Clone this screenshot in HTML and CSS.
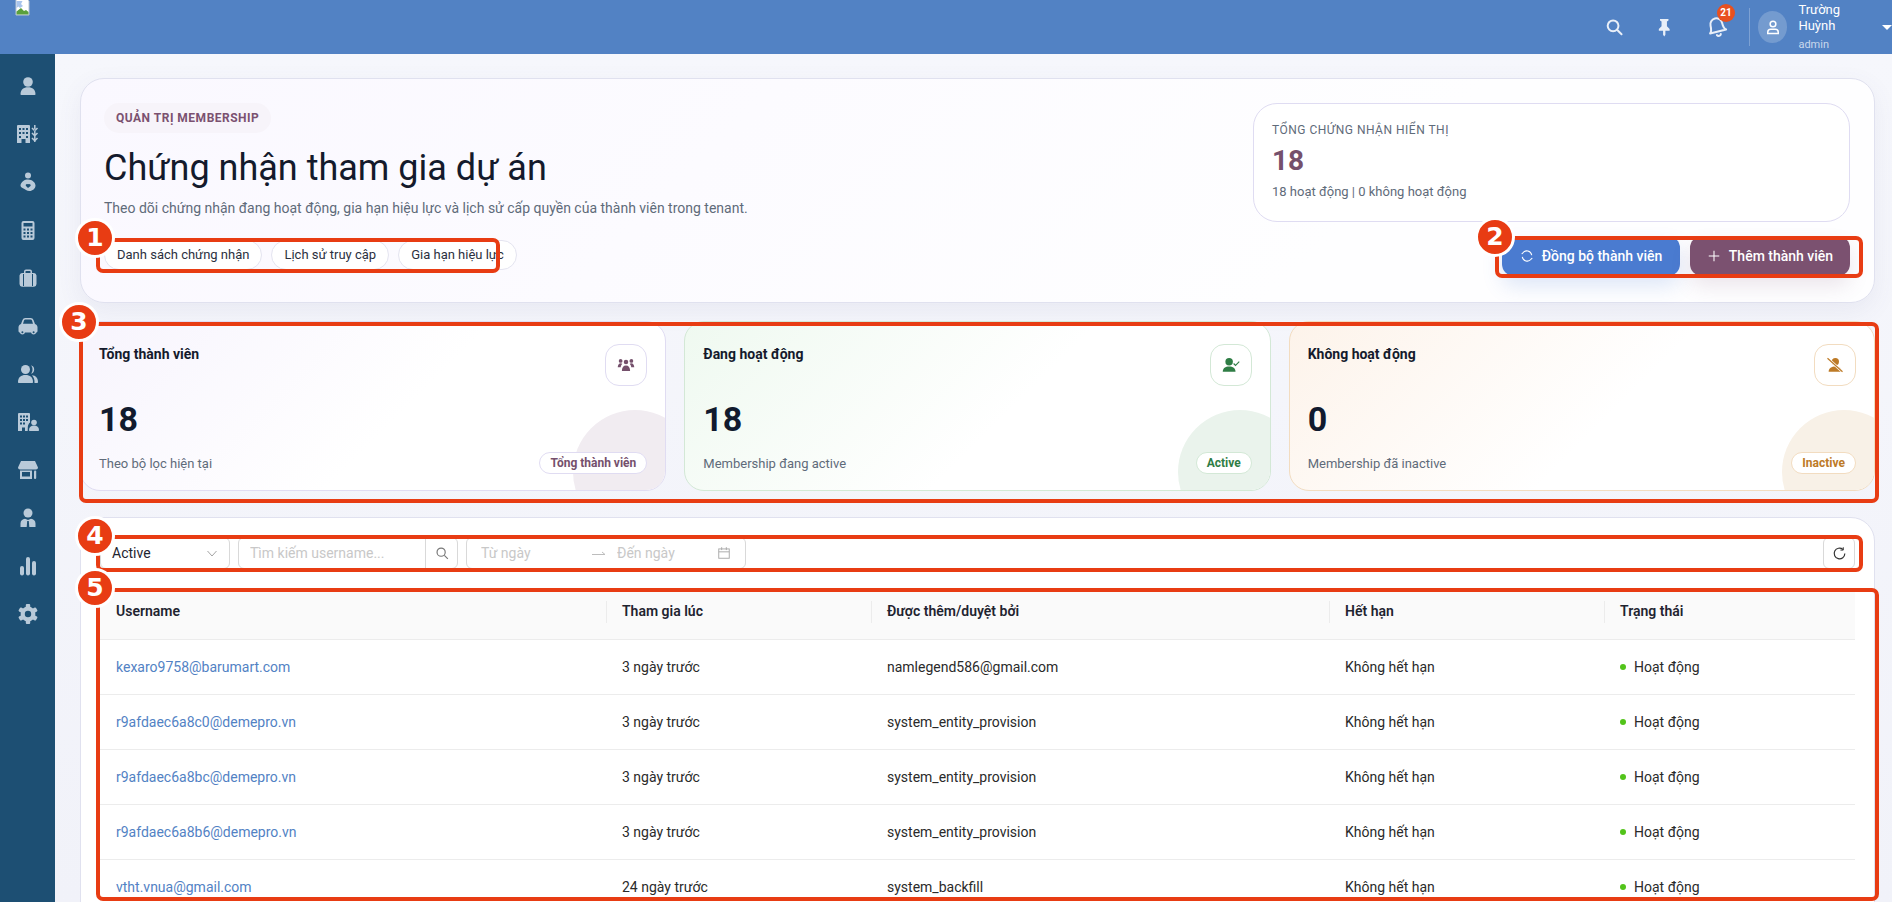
FILE: index.html
```html
<!DOCTYPE html>
<html lang="vi">
<head>
    <meta charset="UTF-8">
    <meta name="viewport" content="width=device-width, initial-scale=1.0">
    <title>Chứng nhận tham gia dự án</title>
    <link rel="stylesheet" href="styles.css">
</head>
<body>
    <div class="app">
        <!-- Topbar -->
        <header class="topbar">
            <svg class="broken-img" viewBox="0 0 16 16">
                <path d="M1 -3h9l4 4v14H1z" fill="#fff" stroke="#b9c4d0" stroke-width="1"/>
                <path d="M1.5 14.5v-3L6 8l3 3 2-1 2.500 2v2.500z" fill="#5aa03c"/>
                <path d="M1.500 8V1h6L6 4l2 2-3 2-1.500-1.500z" fill="#a8c4ec"/>
            </svg>
            <div class="topbar-right">
                <svg class="top-icon" viewBox="0 0 24 24" fill="none" stroke="currentColor" stroke-width="2.600" stroke-linecap="round"><circle cx="10.500" cy="10.500" r="7"/><path d="M16 16l5.500 5.500"/></svg>
                <svg class="top-icon" viewBox="0 0 24 24" fill="currentColor"><path d="M6.500 1.500h11v2.200l-2 1.300v6l3.500 3.500v2.500h-5.500v5l-1.500 2.500-1.500-2.500v-5H5v-2.500L8.500 11V5l-2-1.300z"/></svg>
                <div class="bell">
                    <svg class="top-icon" viewBox="0 0 24 24" fill="none" stroke="currentColor" stroke-width="2.200" stroke-linecap="round" stroke-linejoin="round"><g transform="rotate(-14 12 12)"><path d="M12 2.500a6.500 6.500 0 0 0-6.500 6.500c0 6-2.500 8-2.500 8h18s-2.500-2-2.500-8A6.500 6.500 0 0 0 12 2.500z"/><path d="M9.800 20.500a2.400 2.400 0 0 0 4.400 0"/></g></svg>
                    <span class="bell-count">21</span>
                </div>
                <div class="top-divider"></div>
                <div class="avatar">
                    <svg viewBox="0 0 24 24" fill="none" stroke="#fff" stroke-width="2"><circle cx="12" cy="8" r="3.800"/><path d="M5 20.500v-1.500c0-2.500 2-4 4-4h6c2 0 4 1.500 4 4v1.500z"/></svg>
                </div>
                <div class="user-info">
                    <span class="user-name">Trường Huỳnh</span>
                    <span class="user-role">admin</span>
                </div>
                <span class="caret"></span>
            </div>
        </header>

        <div class="body-wrap">
            <!-- Sidebar -->
            <nav class="sidebar">
                <a class="side-item"><svg viewBox="0 0 24 24" fill="currentColor"><circle cx="12" cy="8" r="4.800"/><path d="M4.500 20.300c0-4.500 3-7 7.500-7s7.500 2.500 7.500 7c0 .5-.3.8-.8.8H5.300c-.5 0-.8-.3-.8-.8z"/></svg></a>
                <a class="side-item"><svg viewBox="0 0 24 24" fill="currentColor"><path fill-rule="evenodd" d="M1 4a1 1 0 0 1 1-1h11a1 1 0 0 1 1 1v17H9.500v-4h-4v4H1zM3 6h2v2H3zM6.500 6h2v2h-2zM10 6h2v2h-2zM3 10h2v2H3zM6.500 10h2v2h-2zM10 10h2v2h-2zM3 14h2v2H3zM10 14h2v2h-2z"/><path d="M18.800 3v4M16 6l2.500 2.500M21.500 6L19 8.500M16 11l2.500 2.500M21.500 11L19 13.500M16 16l2.500 2.500M21.500 16L19 18.500M18.800 9v11" stroke="currentColor" stroke-width="1.500" fill="none"/></svg></a>
                <a class="side-item"><svg viewBox="0 0 24 24" fill="currentColor"><circle cx="12" cy="5.500" r="3"/><path fill-rule="evenodd" d="M4.500 15c1-3.500 4-5.500 7.500-5.500 4 0 7.500 3 7.500 6 0 3-3 5.500-6 5.500-3 0-4-2-7-3-1-.4-2.200-1.500-2-3zM12 14.500c-1-1-3 0-2 1.500l2 2 2.500-2c1-1.500-1.500-2.500-2.500-1.500z"/></svg></a>
                <a class="side-item"><svg viewBox="0 0 24 24" fill="currentColor"><path fill-rule="evenodd" d="M7.500 3h9a2 2 0 0 1 2 2v15a2 2 0 0 1-2 2h-9a2 2 0 0 1-2-2V5a2 2 0 0 1 2-2zM7.500 5v3.500h9V5zM7.500 10.500v2h2v-2zM11 10.500v2h2v-2zM14.500 10.500v2h2v-2zM7.500 14v2h2v-2zM11 14v2h2v-2zM14.500 14v2h2v-2zM7.500 17.500v2h2v-2zM11 17.500v2h2v-2zM14.500 17.500v2h2v-2z"/></svg></a>
                <a class="side-item"><svg viewBox="0 0 24 24" fill="currentColor"><path fill-rule="evenodd" d="M8 7V5.500A2 2 0 0 1 10 3.500h4a2 2 0 0 1 2 2V7h2a3 3 0 0 1 2.500 2.500V18a3 3 0 0 1-2.500 2.800H6A3 3 0 0 1 3.500 18V9.500A3 3 0 0 1 6 7zM9.500 5.500V7h5V5.500a.5.5 0 0 0-.5-.5h-4a.5.5 0 0 0-.5.5zM7 8v12h1V8zM16 8v12h1V8z"/></svg></a>
                <a class="side-item"><svg viewBox="0 0 24 24" fill="currentColor"><path fill-rule="evenodd" d="M5 10l1.500-4a3 3 0 0 1 2.800-2h5.400a3 3 0 0 1 2.800 2L19 10c1.500.5 2.500 1.800 2.500 3.300V17c0 .8-.5 1.500-1.300 1.500a2.700 2.700 0 0 1-5.200 0H9a2.700 2.700 0 0 1-5.200 0c-.8 0-1.300-.7-1.300-1.500v-3.700C2.500 11.800 3.500 10.500 5 10zM7 9.800h10l-1-3.300c-.2-.6-.7-1-1.300-1H9.300c-.6 0-1.100.4-1.300 1zM6.400 17.200a1 1 0 1 0 0 2 1 1 0 0 0 0-2zM17.600 17.200a1 1 0 1 0 0 2 1 1 0 0 0 0-2z"/></svg></a>
                <a class="side-item"><svg viewBox="0 0 24 24" fill="currentColor"><circle cx="9.500" cy="7.500" r="4.500"/><path d="M2 20c0-4.500 3-7 7.500-7s7.500 2.500 7.500 7c0 .6-.4 1-1 1H3c-.6 0-1-.4-1-1z"/><path d="M15 3.200a4.500 4.500 0 0 1 0 8.600c1-1.200 1.500-2.700 1.500-4.300S16 4.400 15 3.200zM16 13.200c3.800.2 6 2.800 6 6.800 0 .6-.4 1-1 1h-2.500c.2-3-.6-5.800-2.500-7.800z"/></svg></a>
                <a class="side-item"><svg viewBox="0 0 24 24" fill="currentColor"><path fill-rule="evenodd" d="M2 4a1 1 0 0 1 1-1h10a1 1 0 0 1 1 1v8.500c-1.300 1-2 2.500-2.200 4.500L11.700 21H9v-3.500H6V21H2zM4 5.500v2h2v-2zM7 5.500v2h2v-2zM10 5.500v2h2v-2zM4 9v2h2V9zM7 9v2h2V9zM10 9v2h2V9zM4 12.500v2h2v-2zM7 12.500v2h2v-2z"/><circle cx="18" cy="12.500" r="2.800"/><path d="M13 20c0-2.800 2-4.500 5-4.500s5 1.700 5 4.500c0 .6-.4 1-1 1h-8c-.6 0-1-.4-1-1z"/></svg></a>
                <a class="side-item"><svg viewBox="0 0 24 24" fill="currentColor"><path d="M5 3h14l3 6.500c0 1.200-1 2-2 2H4c-1 0-2-.8-2-2z"/><path fill-rule="evenodd" d="M4 12.500h12V21H4zM6 14v4.500h8V14z"/><rect x="18" y="12.500" width="2.200" height="8.500" rx="1"/></svg></a>
                <a class="side-item"><svg viewBox="0 0 24 24" fill="currentColor"><circle cx="12" cy="7" r="4.500"/><path fill-rule="evenodd" d="M4.500 21v-3.500c0-2.800 2-4.500 4.500-4.700l3 1.200 3-1.200c2.500.2 4.500 1.900 4.500 4.700V21zM11.200 15l-.5 6h2.600l-.5-6z"/></svg></a>
                <a class="side-item"><svg viewBox="0 0 24 24" fill="currentColor"><rect x="4" y="12" width="4" height="9.500" rx="2"/><rect x="10" y="3" width="4" height="18.500" rx="2"/><rect x="16" y="7" width="4" height="14.500" rx="2"/></svg></a>
                <a class="side-item"><svg viewBox="0 0 24 24" fill="none" stroke="currentColor"><circle cx="12" cy="12" r="5.300" stroke-width="4.200"/><g fill="currentColor" stroke="none"><rect x="9.800" y="2" width="4.400" height="5" rx="1"/><rect x="9.800" y="2" width="4.400" height="5" rx="1" transform="rotate(60 12 12)"/><rect x="9.800" y="2" width="4.400" height="5" rx="1" transform="rotate(120 12 12)"/><rect x="9.800" y="2" width="4.400" height="5" rx="1" transform="rotate(180 12 12)"/><rect x="9.800" y="2" width="4.400" height="5" rx="1" transform="rotate(240 12 12)"/><rect x="9.800" y="2" width="4.400" height="5" rx="1" transform="rotate(300 12 12)"/></g></svg></a>
            </nav>

            <main class="main">
                <!-- Hero -->
                <section class="hero">
                    <div class="hero-left">
                        <span class="eyebrow">QUẢN TRỊ MEMBERSHIP</span>
                        <h1 class="hero-title">Chứng nhận tham gia dự án</h1>
                        <p class="hero-sub">Theo dõi chứng nhận đang hoạt động, gia hạn hiệu lực và lịch sử cấp quyền của thành viên trong tenant.</p>
                        <div class="hero-tabs">
                            <span class="tab-pill">Danh sách chứng nhận</span>
                            <span class="tab-pill">Lịch sử truy cập</span>
                            <span class="tab-pill">Gia hạn hiệu lực</span>
                        </div>
                    </div>
                    <div class="hero-right">
                        <div class="total-box">
                            <div class="total-label">TỔNG CHỨNG NHẬN HIỂN THỊ</div>
                            <div class="total-value">18</div>
                            <div class="total-sub">18 hoạt động | 0 không hoạt động</div>
                        </div>
                        <div class="hero-actions">
                            <button class="btn btn-blue">
                                <svg viewBox="0 0 24 24" fill="none" stroke="currentColor" stroke-width="1.800" stroke-linecap="round"><path d="M20 10a8.500 8.500 0 0 0-15-3.500L3.500 8M4 14a8.500 8.500 0 0 0 15 3.500l1.500-1.500"/><path d="M3.500 3.500V8H8M20.500 20.500V16H16" stroke-width="0"/></svg>
                                Đồng bộ thành viên
                            </button>
                            <button class="btn btn-purple">
                                <svg viewBox="0 0 24 24" fill="none" stroke="currentColor" stroke-width="1.800"><path d="M12 3v18M3 12h18"/></svg>
                                Thêm thành viên
                            </button>
                        </div>
                    </div>
                </section>

                <!-- KPI cards -->
                <section class="kpi-grid">
                    <div class="kpi-card kpi-total">
                        <div class="kpi-head">
                            <span class="kpi-title">Tổng thành viên</span>
                            <span class="kpi-icon"><svg viewBox="0 0 24 24" fill="currentColor"><circle cx="12" cy="8" r="3"/><circle cx="4.800" cy="6.500" r="2.500"/><circle cx="19.200" cy="6.500" r="2.500"/><path d="M6.500 20c0-5 2-7.500 5.500-7.500s5.500 2.500 5.500 7.500zM1 15c0-3 1.500-5.500 4-5.500 1 0 1.500.3 2 .8C5.800 12 5 13.500 5 15zM23 15c0-3-1.500-5.500-4-5.500-1 0-1.500.3-2 .8 1.200 1.700 2 3.200 2 4.700z"/></svg></span>
                        </div>
                        <div class="kpi-value">18</div>
                        <div class="kpi-foot">
                            <span class="kpi-note">Theo bộ lọc hiện tại</span>
                            <span class="kpi-tag">Tổng thành viên</span>
                        </div>
                    </div>
                    <div class="kpi-card kpi-active">
                        <div class="kpi-head">
                            <span class="kpi-title">Đang hoạt động</span>
                            <span class="kpi-icon"><svg viewBox="0 0 24 24" fill="currentColor"><circle cx="9.500" cy="7.500" r="5"/><path d="M1 21c0-4.500 3.500-7 8.500-7s8.500 2.500 8.500 7z"/><path d="M15.500 10l2.500 2.500 5-5" fill="none" stroke="currentColor" stroke-width="1.500"/></svg></span>
                        </div>
                        <div class="kpi-value">18</div>
                        <div class="kpi-foot">
                            <span class="kpi-note">Membership đang active</span>
                            <span class="kpi-tag">Active</span>
                        </div>
                    </div>
                    <div class="kpi-card kpi-inactive">
                        <div class="kpi-head">
                            <span class="kpi-title">Không hoạt động</span>
                            <span class="kpi-icon"><svg viewBox="0 0 24 24" fill="currentColor"><circle cx="12.500" cy="7.500" r="4.800"/><path d="M3.500 21c0-4.500 4-7 9-7s8.500 2.500 8.500 7z"/><path d="M2 3l20 18" stroke="#fff" stroke-width="3.500"/><path d="M2 3l20 18" stroke="currentColor" stroke-width="1.600"/></svg></span>
                        </div>
                        <div class="kpi-value">0</div>
                        <div class="kpi-foot">
                            <span class="kpi-note">Membership đã inactive</span>
                            <span class="kpi-tag">Inactive</span>
                        </div>
                    </div>
                </section>

                <!-- Filter + table -->
                <section class="panel">
                    <div class="filters">
                        <div class="field select-field">
                            <span>Active</span>
                            <svg viewBox="0 0 24 24" fill="none" stroke="#9a9a9a" stroke-width="1.800"><path d="M3 8l9 10 9-10"/></svg>
                        </div>
                        <div class="field search-field">
                            <input type="text" placeholder="Tìm kiếm username...">
                            <span class="search-btn"><svg viewBox="0 0 24 24" fill="none" stroke="#777" stroke-width="2"><circle cx="10.500" cy="10.500" r="7"/><path d="M16 16l6 6"/></svg></span>
                        </div>
                        <div class="field date-field">
                            <input type="text" placeholder="Từ ngày">
                            <svg class="date-arrow" viewBox="0 0 16 8" fill="none" stroke="#bdbdbd" stroke-width="1"><path d="M1 5.500h13M11 3l3 2.500"/></svg>
                            <input type="text" placeholder="Đến ngày">
                            <svg class="date-cal" viewBox="0 0 24 24" fill="none" stroke="#a8a8a8" stroke-width="1.600"><rect x="3" y="5" width="18" height="16"/><path d="M3 10h18M8 2v5M16 2v5"/></svg>
                        </div>
                        <button class="refresh-btn"><svg viewBox="0 0 24 24" fill="none" stroke="#333" stroke-width="1.900"><path d="M20.500 12a8.500 8.500 0 1 1-3-6.500"/><path d="M18 2v4.500h-4.500" stroke-width="1.600"/></svg></button>
                    </div>

                    <table class="member-table">
                        <thead>
                            <tr>
                                <th class="col-user">Username</th>
                                <th class="col-joined">Tham gia lúc</th>
                                <th class="col-by">Được thêm/duyệt bởi</th>
                                <th class="col-exp">Hết hạn</th>
                                <th>Trạng thái</th>
                            </tr>
                        </thead>
                        <tbody>
                            <tr>
                                <td><a class="user-link">kexaro9758@barumart.com</a></td>
                                <td>3 ngày trước</td>
                                <td>namlegend586@gmail.com</td>
                                <td>Không hết hạn</td>
                                <td><span class="status-dot"></span>Hoạt động</td>
                            </tr>
                            <tr>
                                <td><a class="user-link">r9afdaec6a8c0@demepro.vn</a></td>
                                <td>3 ngày trước</td>
                                <td>system_entity_provision</td>
                                <td>Không hết hạn</td>
                                <td><span class="status-dot"></span>Hoạt động</td>
                            </tr>
                            <tr>
                                <td><a class="user-link">r9afdaec6a8bc@demepro.vn</a></td>
                                <td>3 ngày trước</td>
                                <td>system_entity_provision</td>
                                <td>Không hết hạn</td>
                                <td><span class="status-dot"></span>Hoạt động</td>
                            </tr>
                            <tr>
                                <td><a class="user-link">r9afdaec6a8b6@demepro.vn</a></td>
                                <td>3 ngày trước</td>
                                <td>system_entity_provision</td>
                                <td>Không hết hạn</td>
                                <td><span class="status-dot"></span>Hoạt động</td>
                            </tr>
                            <tr>
                                <td><a class="user-link">vtht.vnua@gmail.com</a></td>
                                <td>24 ngày trước</td>
                                <td>system_backfill</td>
                                <td>Không hết hạn</td>
                                <td><span class="status-dot"></span>Hoạt động</td>
                            </tr>
                        </tbody>
                    </table>
                </section>
            </main>
        </div>

        <!-- Numbered callouts drawn over the page -->
        <div class="mark mark-1"></div>
        <div class="mark mark-2"></div>
        <div class="mark mark-3"></div>
        <div class="mark mark-4"></div>
        <div class="mark mark-5"></div>
        <span class="num num-1">1</span>
        <span class="num num-2">2</span>
        <span class="num num-3">3</span>
        <span class="num num-4">4</span>
        <span class="num num-5">5</span>
    </div>
</body>
</html>
```

FILE: styles.css
```css
/* Global */
* {
    box-sizing: border-box;
}

html, body {
    margin: 0;
    padding: 0;
    height: 100%;
    overflow: hidden;
}

body {
    font-family: Roboto, 'Liberation Sans', sans-serif;
    font-size: 14px;
    color: #1f2430;
    background: #f4f5fb;
}

.app {
    position: relative;
    display: flex;
    flex-direction: column;
    height: 902px;
    overflow: hidden;
}

/* Topbar */
.topbar {
    flex: 0 0 54px;
    display: flex;
    justify-content: flex-end;
    position: relative;
    background: #5282c4;
    color: #e9eff8;
}

.broken-img {
    position: absolute;
    left: 15px;
    top: 0;
    width: 16px;
    height: 16px;
}

.topbar-right {
    display: flex;
    align-items: center;
    height: 100%;
    width: 302px;
    padding-left: 15px;
}

.top-icon {
    width: 20px;
    height: 20px;
    display: block;
    margin-right: 32px;
}

.bell {
    position: relative;
    margin-right: 0;
}

.bell .top-icon {
    width: 22px;
    height: 22px;
    margin-right: 21px;
}

.bell-count {
    position: absolute;
    left: 11px;
    top: -12px;
    width: 18px;
    height: 18px;
    border-radius: 50%;
    background: #e8501f;
    color: #fff;
    font-size: 10px;
    font-weight: 700;
    line-height: 18px;
    text-align: center;
}

.top-divider {
    width: 1px;
    height: 38px;
    background: rgba(255, 255, 255, 0.25);
    margin-right: 8px;
}

.avatar {
    width: 32px;
    height: 32px;
    border-radius: 50%;
    background: rgba(255, 255, 255, 0.2);
    display: flex;
    align-items: center;
    justify-content: center;
    margin-right: 11px;
}

.avatar svg {
    width: 18px;
    height: 18px;
}

.user-info {
    display: flex;
    flex-direction: column;
    gap: 4px;
    margin-right: 8px;
}

.user-name {
    font-size: 13px;
    line-height: 16px;
    color: #fff;
}

.user-role {
    font-size: 11px;
    line-height: 14px;
    color: rgba(255, 255, 255, 0.7);
}

.caret {
    width: 0;
    height: 0;
    border-left: 5px solid transparent;
    border-right: 5px solid transparent;
    border-top: 5px solid #fff;
}

/* Sidebar */
.body-wrap {
    flex: 1;
    display: flex;
    min-height: 0;
}

.sidebar {
    flex: 0 0 55px;
    padding-top: 8px;
    background: #1d4f73;
    color: #b9cad9;
}

.side-item {
    display: flex;
    align-items: center;
    justify-content: center;
    height: 48px;
}

.side-item svg {
    width: 24px;
    height: 24px;
}

/* Main */
.main {
    flex: 1;
    min-width: 0;
    padding: 24px 17px 0 25px;
    background: linear-gradient(180deg, #f6f7fc, #f1f2f9);
}

/* Hero */
.hero {
    display: flex;
    justify-content: space-between;
    height: 225px;
    margin-bottom: 18px;
    padding: 24px 24px 0 23px;
    background: linear-gradient(135deg, #faf8ff, #fefeff 70%);
    border: 1px solid #e0e1ef;
    border-radius: 24px;
    box-shadow: 0 8px 24px rgba(90, 90, 140, 0.08);
}

.eyebrow {
    display: inline-block;
    height: 30px;
    padding: 0 12px;
    border-radius: 15px;
    background: #f7f4fa;
    color: #7b5170;
    font-size: 12px;
    font-weight: 700;
    line-height: 30px;
    letter-spacing: 0.5px;
}

.hero-title {
    margin: 13px 0 6px;
    font-size: 36px;
    font-weight: 400;
    line-height: 44px;
    color: #141a2c;
}

.hero-sub {
    margin: 0;
    font-size: 14px;
    line-height: 24px;
    color: #5f6b7a;
}

.hero-tabs {
    display: flex;
    gap: 9px;
    margin-top: 20px;
}

.tab-pill {
    height: 30px;
    padding: 0 12px;
    border: 1px solid #e4e4f0;
    border-radius: 15px;
    background: #fff;
    font-size: 13px;
    line-height: 28px;
    color: #2b3040;
}

.hero-right {
    width: 597px;
}

.total-box {
    height: 119px;
    padding: 18px 18px 0;
    background: #fff;
    border: 1px solid #dfdcf2;
    border-radius: 24px;
}

.total-label {
    font-size: 12px;
    line-height: 16px;
    letter-spacing: 0.5px;
    color: #5f6b7a;
}

.total-value {
    margin: 6px 0 5px;
    font-size: 28px;
    font-weight: 700;
    line-height: 34px;
    color: #75506c;
}

.total-sub {
    font-size: 13px;
    line-height: 18px;
    color: #5f6b7a;
}

.hero-actions {
    display: flex;
    justify-content: flex-end;
    gap: 10px;
    margin-top: 14px;
}

.btn {
    display: flex;
    align-items: center;
    justify-content: center;
    gap: 8px;
    height: 40px;
    border: none;
    border-radius: 12px;
    color: #fff;
    font-family: inherit;
    font-size: 14px;
    font-weight: 500;
}

.btn svg {
    width: 14px;
    height: 14px;
}

.btn-blue {
    width: 178px;
    background: #4a7bd0;
    box-shadow: 0 10px 20px rgba(74, 123, 208, 0.18);
}

.btn-purple {
    width: 160px;
    background: #7b5170;
    box-shadow: 0 10px 20px rgba(123, 81, 112, 0.14);
}

/* KPI cards */
.kpi-grid {
    display: grid;
    grid-template-columns: repeat(3, 1fr);
    gap: 18px;
    margin-bottom: 26px;
}

.kpi-card {
    position: relative;
    height: 170px;
    padding: 22px 18px 16px;
    overflow: hidden;
    background: #fff;
    border: 1px solid #e0dcf2;
    border-radius: 20px;
}

.kpi-card::after {
    content: "";
    position: absolute;
    right: -32px;
    bottom: -44px;
    width: 124px;
    height: 124px;
    border-radius: 50%;
    background: var(--bubble);
}

.kpi-total {
    --tone: #75506c;
    --bubble: #f1ecf1;
    border-color: #e0dcf2;
    background: linear-gradient(135deg, #f7f4fd, #fff 55%);
}

.kpi-active {
    --tone: #2f7d45;
    --bubble: #eaf3ec;
    border-color: #d3e8d6;
    background: linear-gradient(135deg, #eff9f0, #fff 55%);
}

.kpi-inactive {
    --tone: #bd7a26;
    --bubble: #f8f1e7;
    border-color: #f2dcc0;
    background: linear-gradient(135deg, #fdf3ea, #fff 55%);
}

.kpi-head, .kpi-foot {
    position: relative;
    z-index: 1;
    display: flex;
    justify-content: space-between;
}

.kpi-title {
    font-size: 14px;
    font-weight: 700;
    line-height: 20px;
    color: #141a2c;
}

.kpi-icon {
    display: flex;
    align-items: center;
    justify-content: center;
    width: 42px;
    height: 42px;
    border: 1px solid;
    border-color: inherit;
    border-radius: 14px;
    background: #fff;
    color: var(--tone);
}

.kpi-total .kpi-icon, .kpi-total .kpi-tag { border-color: #e0dcf2; }
.kpi-active .kpi-icon, .kpi-active .kpi-tag { border-color: #d3e8d6; }
.kpi-inactive .kpi-icon, .kpi-inactive .kpi-tag { border-color: #f2dcc0; }

.kpi-icon svg {
    width: 18px;
    height: 18px;
}

.kpi-value {
    margin: 13px 0;
    font-size: 34px;
    font-weight: 700;
    line-height: 40px;
    color: #111a2e;
}

.kpi-foot {
    align-items: center;
}

.kpi-note {
    font-size: 13px;
    color: #5f6b7a;
}

.kpi-tag {
    height: 22px;
    padding: 0 10px;
    border: 1px solid;
    border-radius: 11px;
    background: #fff;
    color: var(--tone);
    font-size: 12px;
    font-weight: 700;
    line-height: 20px;
}

/* Panel */
.panel {
    height: 420px;
    padding: 19px;
    background: #fff;
    border: 1px solid #e0e1ef;
    border-radius: 24px;
}

.filters {
    display: flex;
    gap: 8px;
    height: 32px;
    margin-bottom: 21px;
}

.field {
    display: flex;
    align-items: center;
    height: 32px;
    border: 1px solid #d9d9d9;
    border-radius: 6px;
    background: #fff;
}

.field input {
    min-width: 0;
    border: none;
    outline: none;
    background: transparent;
    font-family: inherit;
    font-size: 14px;
}

.field input::placeholder {
    color: #c8c8c8;
}

.select-field {
    justify-content: space-between;
    width: 130px;
    padding: 0 11px;
}

.select-field svg {
    width: 12px;
    height: 12px;
}

.search-field {
    width: 220px;
}

.search-field input {
    flex: 1;
    padding: 0 11px;
}

.search-btn {
    display: flex;
    align-items: center;
    justify-content: center;
    width: 32px;
    height: 100%;
    border-left: 1px solid #d9d9d9;
}

.search-btn svg {
    width: 14px;
    height: 14px;
}

.date-field {
    width: 280px;
    padding: 0 12px;
}

.date-field input {
    width: 112px;
}

.date-arrow {
    width: 16px;
    height: 8px;
    margin: 0 8px 0 0;
}

.date-field input:nth-of-type(2) {
    width: 96px;
}

.date-cal {
    width: 14px;
    height: 14px;
    margin-left: 6px;
}

.refresh-btn {
    display: flex;
    align-items: center;
    justify-content: center;
    width: 32px;
    height: 32px;
    margin-left: auto;
    padding: 0;
    border: 1px solid #d9d9d9;
    border-radius: 6px;
    background: #fff;
}

.refresh-btn svg {
    width: 15px;
    height: 15px;
}

/* Table */
.member-table {
    width: 100%;
    table-layout: fixed;
    border-collapse: collapse;
}

.member-table th {
    position: relative;
    height: 49px;
    padding: 11px 16px 16px;
    background: #fafafa;
    border-bottom: 1px solid #ececec;
    font-size: 14px;
    font-weight: 600;
    line-height: 20px;
    text-align: left;
    vertical-align: top;
    color: #1f2430;
}

.member-table th + th::before {
    content: "";
    position: absolute;
    left: 0;
    top: 11px;
    width: 1px;
    height: 22px;
    background: #ececec;
}

.col-user { width: 506px; }
.col-joined { width: 265px; }
.col-by { width: 458px; }
.col-exp { width: 275px; }

.member-table td {
    height: 55px;
    padding: 0 16px;
    border-bottom: 1px solid #ececec;
    font-size: 14px;
    color: #2a2a2a;
}

.user-link {
    color: #5282c4;
}

.status-dot {
    display: inline-block;
    width: 6px;
    height: 6px;
    margin-right: 8px;
    border-radius: 50%;
    background: #52c41a;
    vertical-align: 2px;
}

/* Callouts */
.mark {
    position: absolute;
    border: 4px solid #e83c13;
    border-radius: 7px;
}

.mark-1 { left: 96px; top: 238px; width: 404px; height: 35px; }
.mark-2 { left: 1495px; top: 236px; width: 368px; height: 42px; }
.mark-3 { left: 79px; top: 322px; width: 1800px; height: 181px; }
.mark-4 { left: 96px; top: 535px; width: 1767px; height: 37px; }
.mark-5 { left: 96px; top: 588px; width: 1783px; height: 313px; }

.num {
    position: absolute;
    width: 40px;
    height: 40px;
    margin: -20px 0 0 -20px;
    border: 3px solid #fff;
    border-radius: 50%;
    background: #e83c13;
    color: #fff;
    font-family: 'DejaVu Sans', sans-serif;
    font-size: 25px;
    font-weight: 700;
    line-height: 34px;
    text-align: center;
}

.num-1 { left: 95px; top: 238px; }
.num-2 { left: 1495px; top: 237px; }
.num-3 { left: 79px; top: 322px; }
.num-4 { left: 95px; top: 536px; }
.num-5 { left: 95px; top: 588px; }
```
